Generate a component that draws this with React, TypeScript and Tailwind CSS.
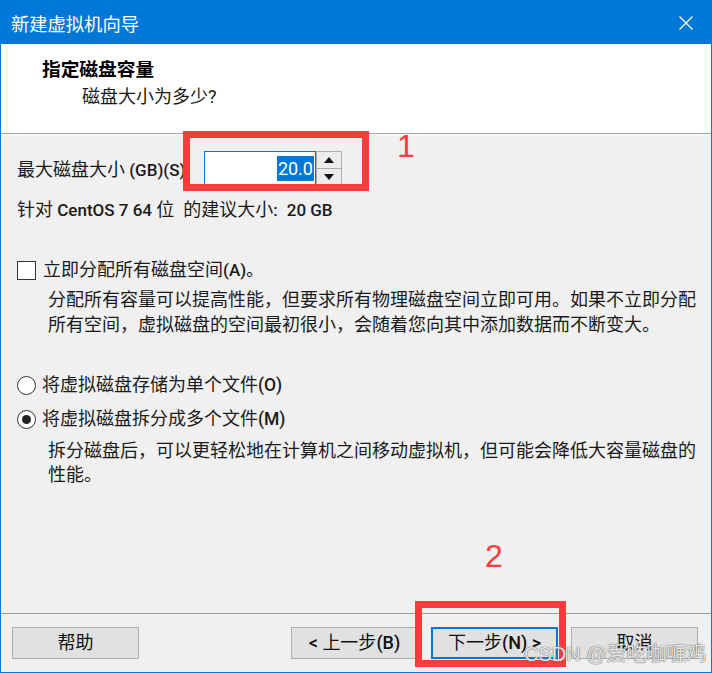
import React from "react";

const CJK = /([\u2e80-\u9fff\u3000-\u303f\uff00-\uffef]+)/;

function T({ s, cjk = "text-[18px]", lat = "text-[17px] font-medium" }: { s: string; cjk?: string; lat?: string }) {
  const parts = s.split(CJK);
  return (
    <>
      {parts.map((p, i) =>
        p === "" ? null : i % 2 === 1 ? (
          <span key={i} className={cjk}>
            {p}
          </span>
        ) : (
          <span key={i} className={lat}>
            {p}
          </span>
        )
      )}
    </>
  );
}

function Btn({ label, focused = false }: { label: string; focused?: boolean }) {
  return (
    <div
      className={
        focused
          ? "w-[127px] h-[32px] flex items-center justify-center bg-[#e1e1e1] border-2 border-[#0078d7] text-[#111]"
          : "w-[127px] h-[32px] flex items-center justify-center bg-[#e1e1e1] border border-[#adadad] text-[#111]"
      }
    >
      <span className="whitespace-nowrap leading-none">
        <T s={label} lat="text-[18px] font-medium" />
      </span>
    </div>
  );
}

export default function App() {
  return (
    <div className="relative w-[712px] h-[673px] flex flex-col font-['Roboto','Noto_Sans_CJK_SC',sans-serif] text-[#1a1a1a] overflow-hidden">
      {/* title bar */}
      <div className="h-[44px] shrink-0 bg-[#0078d7] flex items-center pl-[11px] pr-[19px] pt-[3px]">
        <span className="text-white text-[18.3px] font-['Noto_Sans_CJK_SC',sans-serif] leading-none">新建虚拟机向导</span>
        <svg className="ml-auto mb-[2px]" width="14" height="14" viewBox="0 0 14 14">
          <path d="M0.5 0.5 L13.5 13.5 M13.5 0.5 L0.5 13.5" stroke="white" strokeWidth="1.2" fill="none" />
        </svg>
      </div>

      <div className="flex-1 flex flex-col border-x border-b border-[#0a78d4]">
        {/* white header */}
        <div className="h-[90px] shrink-0 bg-white pl-[41px] pt-[11px] border-b border-[#a0a0a0]">
          <div className="leading-[26px] font-bold text-[18.7px] font-['Noto_Sans_CJK_SC',sans-serif] text-black">
            指定磁盘容量
          </div>
          <div className="leading-[26px] mt-[3px] pl-[40px] whitespace-nowrap">
            <T s="磁盘大小为多少?" lat="text-[18px]" />
          </div>
        </div>

        {/* body */}
        <div className="flex-1 bg-[#f0f0f0] flex flex-col pl-[16px] border-t border-white">
          {/* size row */}
          <div className="mt-[16px] h-[35px] flex items-center">
            <div className="w-[187px] whitespace-nowrap leading-none pt-[2px]">
              <T s="最大磁盘大小 (GB)(S):" />
            </div>
            <div className="w-[112px] h-[35px] bg-white border border-[#0078d7] flex items-center justify-end pr-[1px]">
              <span className="bg-[#0078d7] text-white text-[18px] leading-[25px] px-[1px]">20.0</span>
            </div>
            <div className="w-[26px] h-[35px] flex flex-col">
              <div className="h-[18px] bg-[#ececec] border border-[#adadad] flex items-center justify-center">
                <svg width="10" height="6" viewBox="0 0 10 6">
                  <path d="M0 6 L5 0 L10 6 Z" fill="#111" />
                </svg>
              </div>
              <div className="h-[17px] bg-[#ececec] border border-t-0 border-[#adadad] flex items-center justify-center">
                <svg width="10" height="6" viewBox="0 0 10 6">
                  <path d="M0 0 L10 0 L5 6 Z" fill="#111" />
                </svg>
              </div>
            </div>
          </div>

          <div className="mt-[12px] h-[24px] leading-[24px] whitespace-nowrap flex items-baseline">
            <span>
              <T s="针对 CentOS 7 64 位" />
            </span>
            <span className="ml-[9px]">
              <T s="的建议大小:" />
            </span>
            <span className="ml-[9px]">
              <T s="20 GB" />
            </span>
          </div>

          {/* checkbox */}
          <div className="mt-[36px] h-[24px] flex items-center">
            <div className="w-[19px] h-[19px] bg-white border border-[#333]" />
            <div className="ml-[7px] whitespace-nowrap leading-[24px]">
              <T s="立即分配所有磁盘空间(A)。" />
            </div>
          </div>
          <div className="mt-[5px] pl-[31px] text-[18px] leading-[25px] whitespace-nowrap">
            <div>分配所有容量可以提高性能，但要求所有物理磁盘空间立即可用。如果不立即分配</div>
            <div>所有空间，虚拟磁盘的空间最初很小，会随着您向其中添加数据而不断变大。</div>
          </div>

          {/* radios */}
          <div className="mt-[36px] h-[24px] flex items-center">
            <div className="w-[19px] h-[19px] rounded-full bg-white border border-[#333]" />
            <div className="ml-[6px] whitespace-nowrap leading-[24px]">
              <T s="将虚拟磁盘存储为单个文件(O)" lat="text-[17.5px] font-medium" />
            </div>
          </div>
          <div className="mt-[10px] h-[24px] flex items-center">
            <div className="w-[19px] h-[19px] rounded-full bg-white border border-[#333] flex items-center justify-center">
              <div className="w-[9px] h-[9px] rounded-full bg-[#222]" />
            </div>
            <div className="ml-[6px] whitespace-nowrap leading-[24px]">
              <T s="将虚拟磁盘拆分成多个文件(M)" lat="text-[17.5px] font-medium" />
            </div>
          </div>
          <div className="mt-[8px] pl-[31px] text-[18px] leading-[24px] whitespace-nowrap">
            <div>拆分磁盘后，可以更轻松地在计算机之间移动虚拟机，但可能会降低大容量磁盘的</div>
            <div>性能。</div>
          </div>
        </div>

        {/* footer */}
        <div className="h-[59px] shrink-0 bg-[#f0f0f0] border-t border-[#a0a0a0] flex items-start pt-[13px] pl-[11px] pr-[13px]">
          <Btn label="帮助" />
          <div className="flex-1" />
          <div className="flex gap-[13px]">
            <Btn label="< 上一步(B)" />
            <Btn label="下一步(N) >" focused />
            <Btn label="取消" />
          </div>
        </div>
      </div>

      {/* annotations */}
      <div className="absolute left-[183px] top-[131px] w-[186px] h-[60px] border-[7px] border-[#fa3c3c]" />
      <div className="absolute left-[397px] top-[128px] text-[32px] leading-[36px] text-[#fa3c3c] font-['Liberation_Sans',sans-serif]">1</div>
      <div className="absolute left-[415px] top-[601px] w-[151px] h-[66px] border-[7px] border-[#fa3c3c]" />
      <div className="absolute left-[485px] top-[538px] text-[32px] leading-[36px] text-[#fa3c3c] font-['Liberation_Sans',sans-serif]">2</div>
      <div className="absolute left-[524px] top-[642px] text-[20px] leading-[24px] whitespace-nowrap text-[rgba(255,255,255,0.85)] [text-shadow:0_0_1px_#555,0_0_1px_#777] font-['Liberation_Sans','Noto_Sans_CJK_SC',sans-serif]">
        CSDN @爱吃咖喱鸡
      </div>
    </div>
  );
}
